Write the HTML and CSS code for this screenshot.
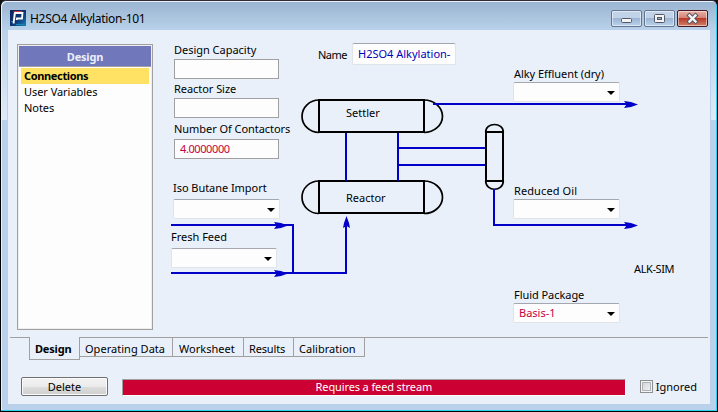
FILE: index.html
```html
<!DOCTYPE html>
<html lang="en">
<head>
<meta charset="utf-8">
<title>H2SO4 Alkylation-101</title>
<link rel="stylesheet" href="styles.css">
</head>
<body>
<div class="window">
  <header class="titlebar">
    <svg class="logo" width="16" height="16" viewBox="0 0 16 16">
      <defs><linearGradient id="lg" x1="0" y1="0" x2="1" y2="1"><stop offset="0" stop-color="#08245c"/><stop offset=".55" stop-color="#0b3575"/><stop offset="1" stop-color="#1786bd"/></linearGradient></defs>
      <rect width="16" height="16" fill="url(#lg)"/>
      <path d="M1 11.5H4M6 14.5H14" stroke="#1687b5" fill="none"/>
      <path d="M3.5 3V9M3.5 1.500H12" stroke="#c73545" fill="none"/>
      <path d="M3.500 13.5L5 3H12.500L12 8.500H7L6.500 10" stroke="#fff" stroke-width="1.800" fill="none"/>
    </svg>
    <h1 class="title">H2SO4 Alkylation-101</h1>
    <div class="controls">
      <button class="ctl" aria-label="Minimize"><svg width="29" height="15"><rect x="9.5" y="7.5" width="10" height="4" rx="1" fill="#f4f4f4" stroke="#535666"/></svg></button>
      <button class="ctl" aria-label="Maximize"><svg width="29" height="15"><rect x="9.5" y="3.5" width="10" height="8" rx="1" fill="#f4f4f4" stroke="#535666"/><rect x="12.5" y="6.5" width="4" height="2" fill="#91add0" stroke="#535666"/></svg></button>
      <button class="ctl close" aria-label="Close"><svg width="29" height="15"><path d="M11.5 4.5L17.5 10.5M17.5 4.5L11.5 10.5" stroke="#535666" stroke-width="4.400" stroke-linecap="square"/><path d="M11.5 4.5L17.5 10.5M17.5 4.5L11.5 10.5" stroke="#f4f4f4" stroke-width="2.4" stroke-linecap="square"/></svg></button>
    </div>
  </header>
  <main class="client">
    <div class="page">
      <nav class="sidebar">
        <h2 class="side-head">Design</h2>
        <ul class="side-list">
          <li class="on">Connections</li>
          <li>User Variables</li>
          <li>Notes</li>
        </ul>
      </nav>
      <section class="sheet">
        <svg class="flowsheet" width="557" height="307" viewBox="153 30 557 307">
          <g class="vessel">
            <path d="M319 100H424V132H319ZM319 181H424V213H319ZM486 132H503V181H486Z"/>
            <path class="cap" d="M319 100A17 16.250 0 0 0 319 132.500M424 100A18.500 16.250 0 0 1 424 132.500M319 181A17 16.250 0 0 0 319 213.500M424 181A18.500 16.250 0 0 1 424 213.500M485.700 132C485.700 122 503.300 122 503.300 132M485.700 181C485.700 192 503.300 192 503.300 181"/>
          </g>
          <g class="pipe">
            <path d="M346 133V181M398 133V181M398 148H485M398 165H485M433 104H628M494 189V225H628"/>
            <path d="M171 225H293V273M171 273H346V224"/>
          </g>
          <g class="tip">
            <path d="M638 104.5L631 102L624 101L626.5 104.5L624 108L631 107Z"/>
            <path d="M638 225.5L631 223L624 222L626.5 225.5L624 229L631 228Z"/>
            <path d="M288 225.5L281 223L274 222L276.500 225.5L274 229L281 228Z"/>
            <path d="M288 273.5L281 271L274 270L276.500 273.5L274 277L281 276Z"/>
            <path d="M346.500 216L344 223L343 228L346.500 226L350 228L349 223Z"/>
          </g>
        </svg>
        <div class="col inlets">
          <label class="w-cap">Design Capacity</label>
          <div class="box"></div>
          <label class="w-size">Reactor Size</label>
          <div class="box"></div>
          <label class="w-num">Number Of Contactors</label>
          <div class="box value num">4.0000000</div>
          <label class="w-iso">Iso Butane Import</label>
          <div class="combo iso"><span class="arrow"></span></div>
          <label class="w-fresh">Fresh Feed</label>
          <div class="combo fresh"><span class="arrow"></span></div>
        </div>
        <div class="col center">
          <div class="name-row"><label class="w-name">Name</label><div class="name-box">H2SO4 Alkylation-</div></div>
          <span class="tag settler">Settler</span>
          <span class="tag reactor">Reactor</span>
        </div>
        <div class="col outlets">
          <label class="w-alky">Alky Effluent (dry)</label>
          <div class="combo"><span class="arrow"></span></div>
          <label class="w-oil">Reduced Oil</label>
          <div class="combo"><span class="arrow"></span></div>
          <span class="sim">ALK-SIM</span>
          <label class="w-fluid">Fluid Package</label>
          <div class="combo value basis">Basis-1<span class="arrow"></span></div>
        </div>
      </section>
    </div>
    <div class="tabs">
      <span class="lead"></span>
      <span class="tab t1">Design</span>
      <span class="tab t2">Operating Data</span>
      <span class="tab t3">Worksheet</span>
      <span class="tab t4">Results</span>
      <span class="tab t5">Calibration</span>
      <span class="trail"></span>
    </div>
    <footer class="footer">
      <button class="delete">Delete</button>
      <div class="status"><span>Requires a feed stream</span></div>
      <span class="check"></span>
      <span class="ignored">Ignored</span>
    </footer>
  </main>
</div>
</body>
</html>
```

FILE: styles.css
```css
* { box-sizing: border-box; }
body { margin: 0; background: #111; font: 11px/14px "Noto Sans", "Open Sans", sans-serif; color: #000; }
h1, h2, ul { margin: 0; padding: 0; font-size: inherit; list-style: none; }
button { font: inherit; padding: 0; margin: 0; color: inherit; }
label, span { white-space: nowrap; }
.window {
  width: 718px; height: 412px; overflow: hidden;
  border: 1px solid; border-color: #302b35 #000 #000;
  border-radius: 6px 6px 0 0;
  padding: 0 6px 6px 7px;
  background:
    linear-gradient(#99b4d1, #b9d1ea) 0 0 / 100% 29px no-repeat,
    linear-gradient(#b9d1ea, #dfeaf8) 1px 29px / 5px 90px no-repeat,
    linear-gradient(#b9d1ea, #dfeaf8) 710px 29px / 5px 90px no-repeat,
    #b9d1ea;
  box-shadow: inset -1px -1px #2ad1ee, inset 1px 1px #e8f2fc;
}
.titlebar { height: 29px; display: flex; align-items: flex-start; padding: 9px 0 0 2px; }
.title { font-size: 12px; font-weight: 400; line-height: 17px; margin-left: 4px; letter-spacing: -.3px; flex: 1; white-space: nowrap; }
.controls { display: flex; gap: 2px; margin: 0 3px 0 0; }
.ctl {
  width: 31px; height: 17px; border: 1px solid #65758f; border-radius: 2px;
  background: linear-gradient(#c1d3e9 0 45%, #9bb5d3 50%, #b9d2ec);
  box-shadow: inset 0 0 0 1px #ffffff80; display: block;
}
.ctl svg { display: block; }
.ctl.close { border-color: #491624; background: linear-gradient(#e5a69b 0 10%, #d58477 45%, #b83a27 50%, #d18069); }
.client { width: 702px; height: 374px; background: #e9f0fa; }
.page { height: 307px; display: flex; }
.sidebar { width: 136px; height: 286px; margin: 14px 0 0 9px; border: 1px solid #a0a0a0; background: #fdfdfd; padding: 1px; box-shadow: inset 0 0 0 1px #eee; flex: none; }
.side-head { height: 21px; border-bottom: 1px solid #a0a0a0; background: #7177bb; color: #e9f0fa; text-align: center; line-height: 22px; letter-spacing: -.2px; }
.side-list { padding: 1px 2px; }
.side-list li { height: 16px; line-height: 16px; padding-left: 3px; letter-spacing: -.05px; }
.side-list .on { background: #ffe164; font-weight: 700; letter-spacing: -.35px; }
.sheet { position: relative; flex: 1; display: flex; }
.flowsheet { position: absolute; left: 0; top: 0; }
.pipe path { fill: none; stroke: #0000c8; stroke-width: 2; }
.tip path { fill: #0000c8; }
.vessel path { fill: none; stroke: #000; stroke-width: 2; }
.vessel .cap { stroke-width: 1.7; }
.col { position: relative; display: flex; flex-direction: column; align-items: flex-start; }
.inlets { width: 165px; padding: 13px 0 0 21px; }
.inlets .box { margin: 2px 0 3px; }
.box { width: 105px; height: 20px; border: 1px solid #a0a0a0; background: #fdfdfd; }
.inlets .w-num { margin-top: 1px; letter-spacing: -.05px; }
.inlets .num { margin: 3px 0 22px; letter-spacing: -.4px; line-height: 17px; }
.value { color: #c8003c; padding-left: 5px; line-height: 18px; white-space: nowrap; }
.combo { position: relative; width: 107px; height: 20px; background: #fdfdfd; border: 1px solid #e0e3e8; border-top-color: #a4a8ae; border-radius: 2px; }
.arrow { position: absolute; right: 4px; top: 8px; border: 4px solid transparent; border-top-color: #000; border-bottom: 0; }
.iso { margin: 4px 0 11px -1px; }
.w-iso { margin-left: -1px; letter-spacing: -.05px; }
.w-fresh { margin-left: -3px; }
.combo.fresh { width: 106px; margin: 4px 0 0 -3px; }
.center { width: 195px; padding-top: 13px; }
.name-row { display: flex; align-items: flex-start; height: 22px; }
.name-row label { width: 34px; padding-top: 5px; letter-spacing: -.5px; }
.name-box { width: 104px; height: 22px; background: #fdfdfd; border: 1px solid #e0e3e8; border-top-color: #a4a8ae; border-radius: 2px; color: #0000b8; line-height: 20px; padding-left: 5px; white-space: nowrap; overflow: hidden; }
.tag { margin-left: 28px; }
.settler { margin-top: 41px; }
.reactor { margin-top: 71px; }
.outlets { flex: 1; padding-top: 37px; }
.outlets .combo { margin-top: 1px; }
.outlets .w-oil { margin: 82px 0 0 1px; letter-spacing: .1px; }
.sim { margin: 43px 0 0 121px; letter-spacing: -.4px; }
.w-alky, .w-fluid { margin-left: 1px; letter-spacing: -.05px; }
.w-fluid { margin-top: 12px; }
.w-cap { letter-spacing: -.02px; }
.w-size { letter-spacing: -.05px; }
.tabs { height: 24px; display: flex; align-items: flex-start; padding: 0 2px; }
.lead { width: 19px; border-top: 1px solid #a0a0a0; }
.tab { height: 20px; border: solid #a0a0a0; border-width: 1px 1px 1px 0; padding-left: 5px; line-height: 22px; letter-spacing: 0.03px; }
.t1 { width: 51px; height: 23px; border-width: 0 1px 1px; line-height: 24px; font-weight: 700; letter-spacing: -.2px; }
.t2 { width: 93px; }
.t3 { width: 71px; padding-left: 6px; }
.t4 { width: 50px; letter-spacing: -.15px; }
.t5 { width: 71px; }
.trail { flex: 1; border-top: 1px solid #a0a0a0; }
.footer { display: flex; align-items: flex-start; padding: 16px 13px 0; }
.delete { width: 87px; height: 19px; border: 1px solid #707070; border-radius: 2px; background: linear-gradient(#f3f3f3 0, #ebebeb 50%, #dddddd 51%, #cfcfcf); box-shadow: inset 0 0 0 1px #fafafa; }
.status { width: 504px; height: 17px; margin: 2px 14px 0; border: 1px solid; border-color: #a0a0a0 #fff #fff #a0a0a0; background: #cc0033; color: #fff; text-align: center; line-height: 14px; letter-spacing: -.12px; }
.check { width: 13px; height: 13px; margin: 3px 3px 0 0; border: 1px solid #8e8f8f; background: linear-gradient(135deg, #cbcfd5, #f6f6f6); box-shadow: inset 0 0 0 1px #f4f4f4, inset 0 0 0 2px #aeb3b9; }
.ignored { margin-top: 3px; }
```
